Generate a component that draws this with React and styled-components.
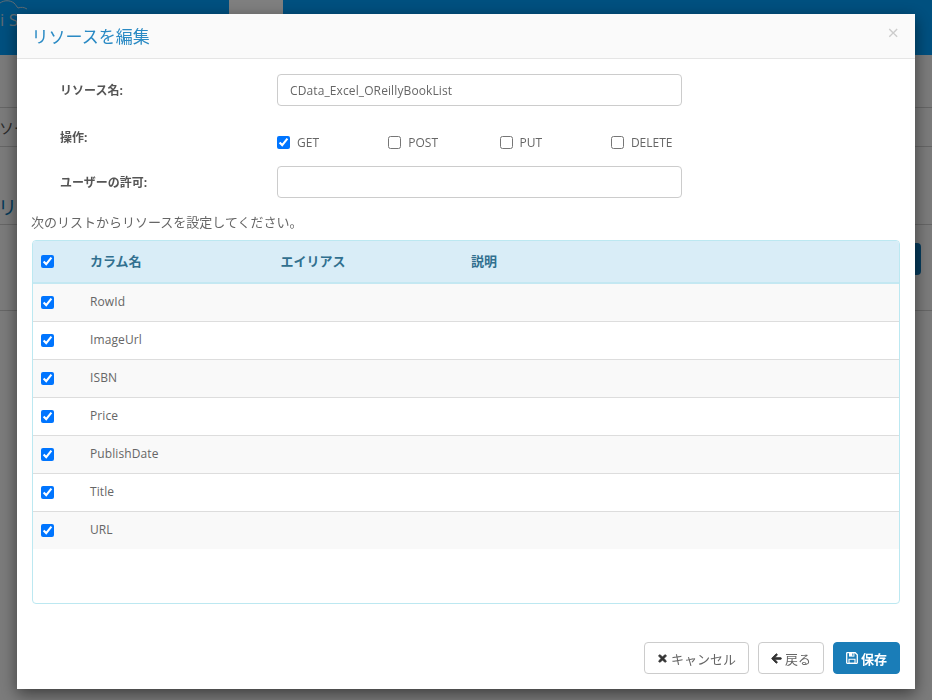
import React from "react";
import styled, { createGlobalStyle } from "styled-components";
import { FaTimes, FaArrowLeft } from "react-icons/fa";

const GlobalStyle = createGlobalStyle`
  html, body {
    margin: 0;
    padding: 0;
    height: 100%;
    overflow: hidden;
    background: #fff;
    font-family: "Open Sans", "Noto Sans CJK JP", sans-serif;
    font-size: 12px;
    color: #666;
  }
  * { box-sizing: border-box; }
`;

// page behind the dialog
const Page = styled.div`
  width: 932px;
  height: 700px;
  background: #f6f6f6;
  overflow: hidden;
`;

const TopBar = styled.div`
  height: 55px;
  background: #00a0fe;
  display: flex;
  align-items: flex-start;
`;

const Logo = styled.div`
  width: 229px;
  position: relative;
  padding: 4px 0 0 0;
  font-size: 17px;
  line-height: 32px;
  color: #bcd6e8;
`;

const LogoCloud = styled.svg`
  position: absolute;
  left: 0;
  top: 0;
`;

const TopTab = styled.div`
  width: 54px;
  height: 14px;
  background: #fff;
`;

const Section = styled.div`
  height: ${({ $h }) => $h}px;
  border-bottom: 1px solid #ccc;
  display: flex;
  align-items: ${({ $end }) => ($end ? "flex-end" : "center")};
`;

// left edge of the page content that stays visible beside the dialog
const Sliver = styled.div`
  width: 17px;
  overflow: hidden;
  white-space: nowrap;
`;

const Crumb = styled.div`
  margin-left: -1px;
  font-size: 15px;
  color: #555;
`;

const PageTitle = styled.div`
  margin-left: -2px;
  padding-bottom: 3px;
  font-size: 19px;
  color: #0b76b4;
`;

const ActionRow = styled.div`
  height: 86px;
  border-bottom: 1px solid #ccc;
  display: flex;
  justify-content: flex-end;
  padding: 18px 11px 0 0;
`;

const PageAction = styled.div`
  height: 32px;
  width: 40px;
  background: #0b76b8;
  border-radius: 4px;
`;

const Overlay = styled.div`
  position: fixed;
  inset: 0;
  background: rgba(0, 0, 0, 0.5);
  padding: 14px 17px 11px;
`;

const Modal = styled.div`
  width: 898px;
  height: 675px;
  background: #fff;
  box-shadow: 0 5px 15px rgba(0, 0, 0, 0.5);
  display: flex;
  flex-direction: column;
`;

const ModalHeader = styled.div`
  height: 45px;
  background: #fafafa;
  border-bottom: 1px solid #e5e5e5;
  display: flex;
  align-items: center;
  justify-content: space-between;
  padding: 0 16px 0 14.5px;
`;

const Title = styled.h4`
  margin: -1px 0 0;
  font-size: 17px;
  font-weight: 400;
  color: #2a8ac4;
`;

const Close = styled.span`
  font-size: 20px;
  line-height: 1;
  color: #ccc;
  margin-top: -6px;
`;

const ModalBody = styled.div`
  flex: 1;
  padding: 15px 15px 0;
  display: flex;
  flex-direction: column;
`;

const FormRow = styled.div`
  display: flex;
  align-items: ${({ $top }) => ($top ? "flex-start" : "center")};
  height: 32px;
  margin-bottom: ${({ $gap }) => $gap}px;
`;

const Label = styled.label`
  width: 245px;
  padding-left: 28px;
  font-weight: 700;
  font-size: 12px;
  color: #555;
`;

const TextInput = styled.input`
  width: 405px;
  height: 32px;
  border: 1px solid #ccc;
  border-radius: 4px;
  padding: 0 12px;
  font: inherit;
  font-size: 12px;
  letter-spacing: 0.11px;
  color: #666;
  background: #fff;
  outline: none;
`;

const Methods = styled.div`
  display: flex;
  align-items: center;
  margin-top: 6px;
`;

const Method = styled.label`
  width: 111.3px;
  display: flex;
  align-items: center;
  gap: 7px;
  font-size: 12px;
  color: #666;
`;

const Check = styled.input.attrs({ type: "checkbox" })`
  width: 13px;
  height: 13px;
  margin: 0;
  accent-color: #0075ff;
`;

const Hint = styled.p`
  margin: 0 0 9px -1px;
  font-size: 13px;
  line-height: 18px;
  color: #666;
`;

const TableBox = styled.div`
  height: 364px;
  border: 1px solid #bce8f1;
  border-radius: 4px;
  overflow: hidden;
`;

const TableHead = styled.div`
  display: grid;
  grid-template-columns: 57px 190.5px 190.5px 1fr;
  align-items: center;
  height: 43px;
  background: #d9edf7;
  border-bottom: 2px solid #c4e8f2;
  font-weight: 700;
  font-size: 13px;
  line-height: 16px;
  color: #31708f;
`;

const HeadCell = styled.span`
  margin-top: -2px;
`;

const TableRow = styled.div`
  display: grid;
  grid-template-columns: 57px 1fr;
  align-items: center;
  height: ${({ $first }) => ($first ? 37 : 38)}px;
  background: ${({ $odd }) => ($odd ? "#f9f9f9" : "#fff")};
  border-top: ${({ $first }) => ($first ? "none" : "1px solid #ddd")};
  font-size: 12px;
  letter-spacing: 0.1px;
  color: #666;
`;

const RowName = styled.span`
  margin-top: -2px;
`;

const CheckCell = styled.div`
  display: flex;
  padding-left: 8px;
`;

const ModalFooter = styled.div`
  display: flex;
  justify-content: flex-end;
  gap: 9px;
  padding: 0 15px 15px;
`;

const Button = styled.button`
  height: 32px;
  padding: 0 12px;
  display: inline-flex;
  align-items: center;
  gap: 3px;
  border-radius: 4px;
  border: 1px solid ${({ $primary }) => ($primary ? "#1a7db8" : "#ccc")};
  background: ${({ $primary }) => ($primary ? "#1a7db8" : "#fff")};
  color: ${({ $primary }) => ($primary ? "#fff" : "#666")};
  font: inherit;
  font-size: 13px;
  font-weight: ${({ $primary }) => ($primary ? 700 : 400)};
  svg {
    flex: none;
    font-size: 11px;
    color: #333;
    stroke: #333;
    stroke-width: 40;
  }
`;

const SaveSvg = styled.svg`
  && {
    stroke: none;
    color: #fff;
  }
`;

const SaveIcon = () => (
  <SaveSvg width="12" height="12" viewBox="0 0 12 12">
    <path
      d="M.7 1.2a.5.5 0 0 1 .5-.5h8l2.1 2.1v8a.5.5 0 0 1-.5.5H1.2a.5.5 0 0 1-.5-.5z"
      fill="none"
      stroke="#fff"
      strokeWidth="1.3"
    />
    <path d="M3 1h5.4v3.6H3z" fill="#fff" />
    <path d="M6.3 1.6h1.1v2.2H6.3z" fill="#1a7db8" />
    <path d="M3 7.2h6v4H3z" fill="none" stroke="#fff" strokeWidth="1.1" />
  </SaveSvg>
);

const columns = ["RowId", "ImageUrl", "ISBN", "Price", "PublishDate", "Title", "URL"];
const methods = [
  { name: "GET", on: true },
  { name: "POST" },
  { name: "PUT" },
  { name: "DELETE" },
];

const App = () => {
  return (
    <>
      <GlobalStyle />
      <Page>
        <TopBar>
          <Logo>
            <LogoCloud width="40" height="20" viewBox="0 0 40 20">
              <path
                d="M0 3c4-3 10-3 14 0 2 2 3 4 4 5 3-1 6-1 9 1"
                fill="none"
                stroke="#bcd6e8"
                strokeWidth="1"
              />
            </LogoCloud>
            i S
          </Logo>
          <TopTab />
        </TopBar>
        <Section $h={53} />
        <Section $h={39}>
          <Sliver>
            <Crumb>ソース</Crumb>
          </Sliver>
        </Section>
        <Section $h={78} $end>
          <Sliver>
            <PageTitle>リソース</PageTitle>
          </Sliver>
        </Section>
        <ActionRow>
          <PageAction />
        </ActionRow>
      </Page>
      <Overlay>
        <Modal>
          <ModalHeader>
            <Title>リソースを編集</Title>
            <Close>×</Close>
          </ModalHeader>
          <ModalBody>
            <FormRow $gap={22}>
              <Label>リソース名:</Label>
              <TextInput readOnly value="CData_Excel_OReillyBookList" />
            </FormRow>
            <FormRow $gap={6} $top>
              <Label>操作:</Label>
              <Methods>
                {methods.map((m) => (
                  <Method key={m.name}>
                    <Check readOnly checked={!!m.on} />
                    {m.name}
                  </Method>
                ))}
              </Methods>
            </FormRow>
            <FormRow $gap={15}>
              <Label>ユーザーの許可:</Label>
              <TextInput readOnly />
            </FormRow>
            <Hint>次のリストからリソースを設定してください。</Hint>
            <TableBox>
              <TableHead>
                <CheckCell>
                  <Check readOnly checked />
                </CheckCell>
                <HeadCell>カラム名</HeadCell>
                <HeadCell>エイリアス</HeadCell>
                <HeadCell>説明</HeadCell>
              </TableHead>
              {columns.map((c, i) => (
                <TableRow key={c} $odd={i % 2 === 0} $first={i === 0}>
                  <CheckCell>
                    <Check readOnly checked />
                  </CheckCell>
                  <RowName>{c}</RowName>
                </TableRow>
              ))}
            </TableBox>
          </ModalBody>
          <ModalFooter>
            <Button>
              <FaTimes />
              キャンセル
            </Button>
            <Button>
              <FaArrowLeft />
              戻る
            </Button>
            <Button $primary>
              <SaveIcon />
              保存
            </Button>
          </ModalFooter>
        </Modal>
      </Overlay>
    </>
  );
};

export default App;
